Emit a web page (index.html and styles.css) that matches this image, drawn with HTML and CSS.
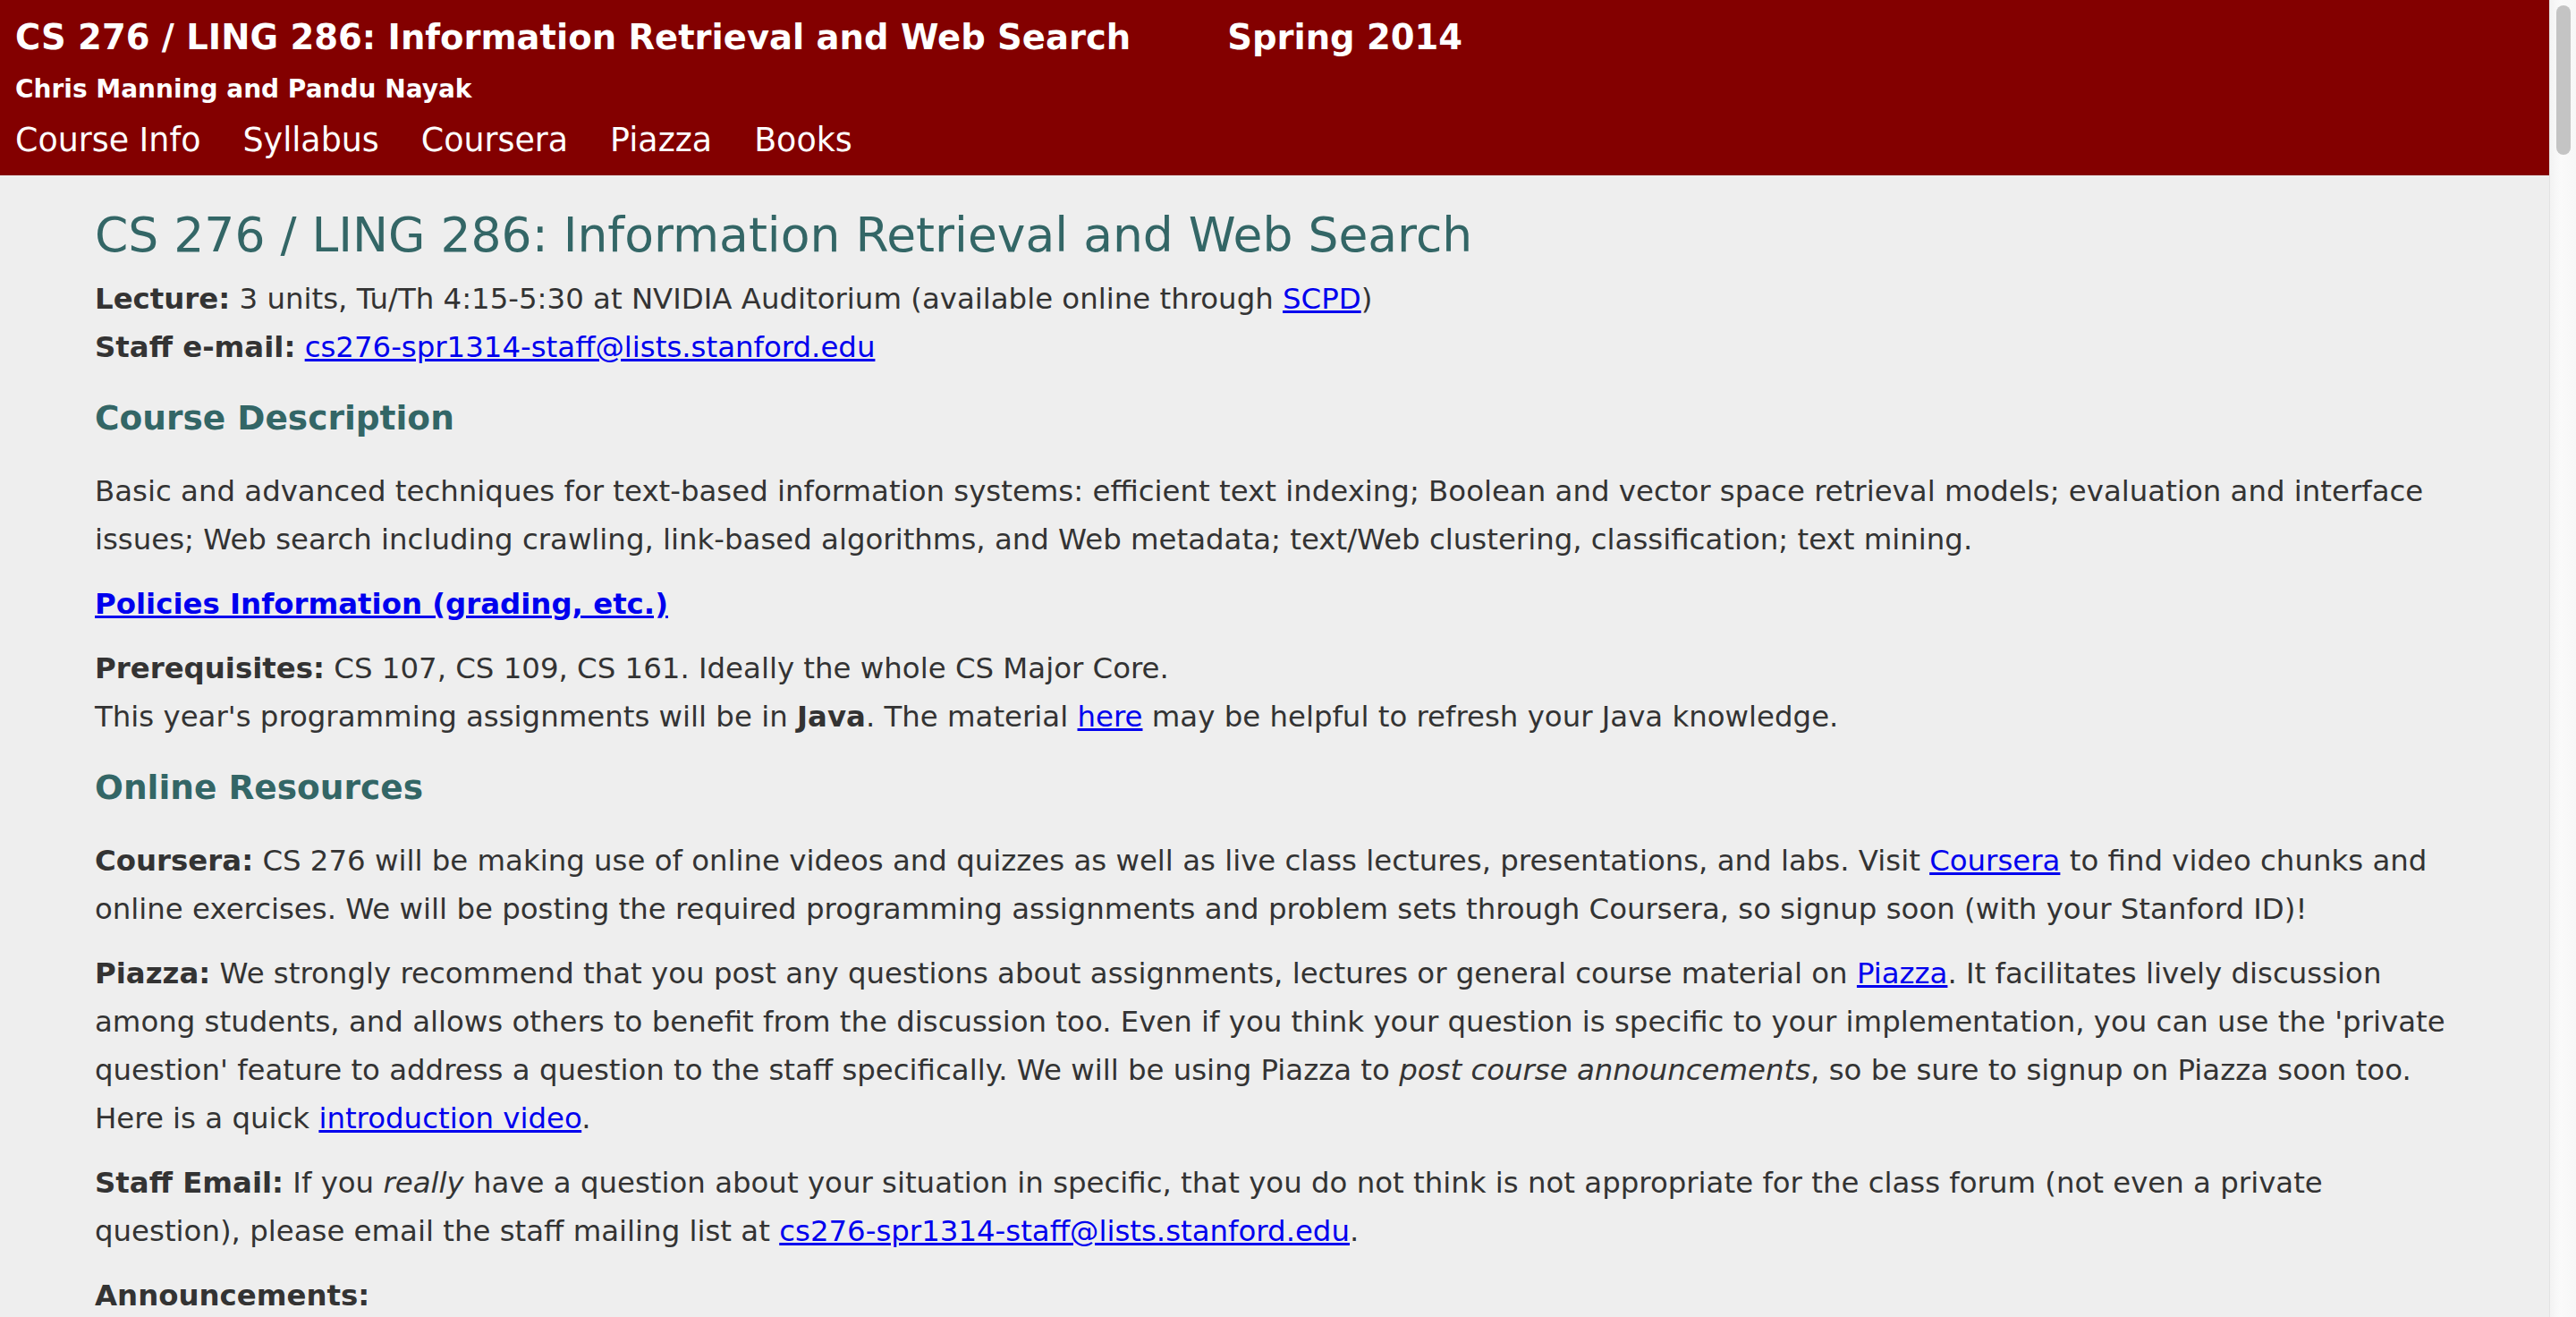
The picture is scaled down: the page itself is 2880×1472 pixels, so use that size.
FILE: index.html
```html
<!DOCTYPE html>
<html lang="en">
<head>
<meta charset="utf-8">
<title>CS 276 / LING 286: Information Retrieval and Web Search</title>
<link rel="stylesheet" href="styles.css">
</head>
<body>
<div class="page">
  <header class="masthead">
    <div class="title-row">
      <span class="course">CS 276 / LING 286: Information Retrieval and Web Search</span>
      <span class="term">Spring 2014</span>
    </div>
    <div class="instructors">Chris Manning and Pandu Nayak</div>
    <nav class="nav">
      <a href="#">Course Info</a>
      <a href="#">Syllabus</a>
      <a href="#">Coursera</a>
      <a href="#">Piazza</a>
      <a href="#">Books</a>
    </nav>
  </header>
  <main class="content">
    <h1 class="page-title">CS 276 / LING 286: Information Retrieval and Web Search</h1>
    <p class="meta"><b>Lecture:</b> 3 units, Tu/Th 4:15-5:30 at NVIDIA Auditorium (available online through <a href="#">SCPD</a>)<br><b>Staff e-mail:</b> <a href="#">cs276-spr1314-staff@lists.stanford.edu</a></p>

    <h3 class="section">Course Description</h3>
    <p>Basic and advanced techniques for text-based information systems: efficient text indexing; Boolean and vector space retrieval models; evaluation and interface issues; Web search including crawling, link-based algorithms, and Web metadata; text/Web clustering, classification; text mining.</p>
    <p><a class="strong-link" href="#">Policies Information (grading, etc.)</a></p>
    <p><b>Prerequisites:</b> CS 107, CS 109, CS 161. Ideally the whole CS Major Core.<br>This year's programming assignments will be in <b>Java</b>. The material <a href="#">here</a> may be helpful to refresh your Java knowledge.</p>

    <h3 class="section">Online Resources</h3>
    <p><b>Coursera:</b> CS 276 will be making use of online videos and quizzes as well as live class lectures, presentations, and labs. Visit <a href="#">Coursera</a> to find video chunks and online exercises. We will be posting the required programming assignments and problem sets through Coursera, so signup soon (with your Stanford ID)!</p>
    <p><b>Piazza:</b> We strongly recommend that you post any questions about assignments, lectures or general course material on <a href="#">Piazza</a>. It facilitates lively discussion among students, and allows others to benefit from the discussion too. Even if you think your question is specific to your implementation, you can use the 'private question' feature to address a question to the staff specifically. We will be using Piazza to <i>post course announcements</i>, so be sure to signup on Piazza soon too. Here is a quick <a href="#">introduction video</a>.</p>
    <p><b>Staff Email:</b> If you <i>really</i> have a question about your situation in specific, that you do not think is not appropriate for the class forum (not even a private question), please email the staff mailing list at <a href="#">cs276-spr1314-staff@lists.stanford.edu</a>.</p>
    <p><b>Announcements:</b></p>
  </main>
</div>
<div class="scrollbar" aria-hidden="true"><div class="scrollbar-thumb"></div></div>
</body>
</html>
```
FILE: styles.css
```css
body {
  margin: 0;
  background: #eeeeee;
  color: #333333;
  font-family: "DejaVu Sans", Verdana, sans-serif;
  font-size: 32.4px;
}

.page {
  margin-right: 30px;
}

.masthead {
  background: #830000;
  color: #ffffff;
  padding: 17px 16px 15px 17px;
  height: 196px;
  box-sizing: border-box;
}

.title-row {
  display: flex;
  gap: 108px;
  font-weight: bold;
  font-size: 38.5px;
  line-height: 50px;
}

.instructors {
  margin-top: 13px;
  font-weight: bold;
  font-size: 28px;
  line-height: 40px;
}

.nav {
  display: flex;
  gap: 47px;
  margin-top: 13px;
  font-size: 36.4px;
  line-height: 48px;
}

.nav a {
  color: #ffffff;
  text-decoration: none;
}

.content {
  padding: 0 90px 60px 106px;
  line-height: 54px;
}

.page-title {
  color: #336666;
  font-weight: normal;
  font-size: 53.5px;
  line-height: 1.2;
  margin: 35px 0 12px;
}

.content p {
  margin: 0 0 18px;
}

.section {
  color: #336666;
  font-size: 37.5px;
  line-height: 1.2;
  margin: 30px 0 32px;
}

.content a {
  color: #0000ee;
}

.strong-link {
  font-weight: bold;
}

.scrollbar {
  position: fixed;
  top: 0;
  right: 0;
  width: 30px;
  height: 100vh;
  box-sizing: border-box;
  border-left: 1px solid #e2e2e2;
  background: linear-gradient(to right, #f3f3f3, #fafafa 40%, #f7f7f7);
}

.scrollbar-thumb {
  position: absolute;
  top: 6px;
  left: 7px;
  width: 16px;
  height: 167px;
  border-radius: 8px;
  background: #c4c4c4;
}
```
